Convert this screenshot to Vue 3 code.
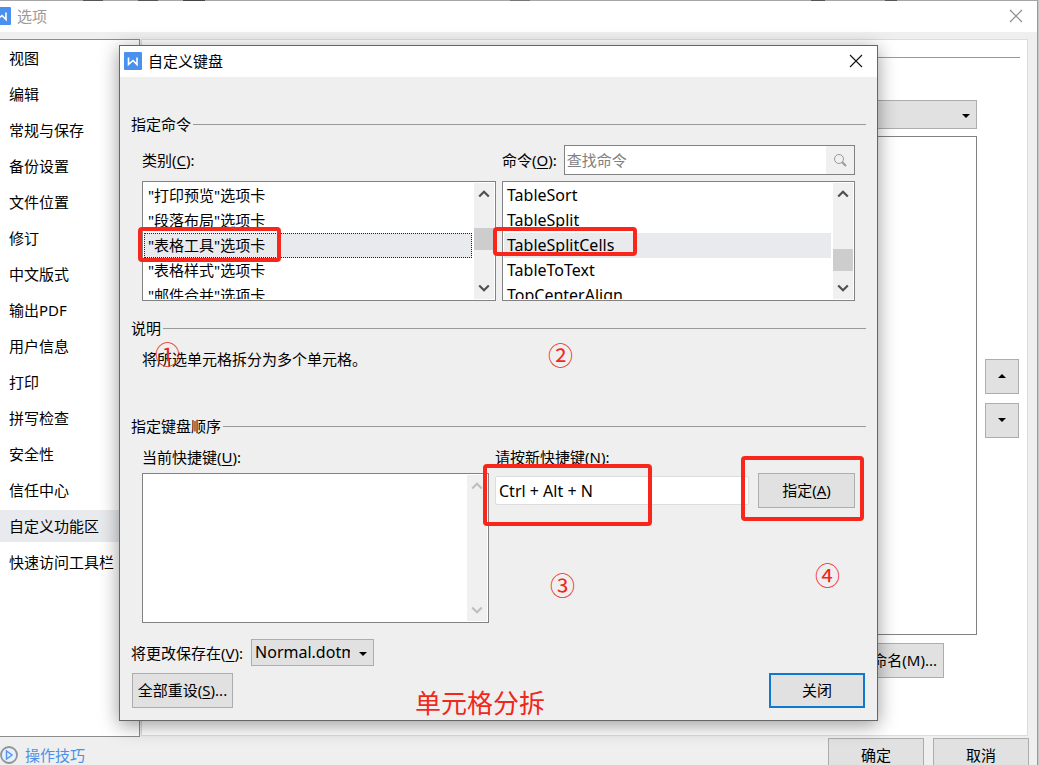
<script setup>
import { ref } from 'vue'

const sections = ['视图', '编辑', '常规与保存', '备份设置', '文件位置', '修订', '中文版式', '输出PDF', '用户信息', '打印', '拼写检查', '安全性', '信任中心', '自定义功能区', '快速访问工具栏']
const activeSection = ref('自定义功能区')

const categories = ['"打印预览"选项卡', '"段落布局"选项卡', '"表格工具"选项卡', '"表格样式"选项卡', '"邮件合并"选项卡']
const activeCategory = ref(categories[2])

const commands = ['TableSort', 'TableSplit', 'TableSplitCells', 'TableToText', 'TopCenterAlign']
const activeCommand = ref(commands[2])

const query = ref('')
const current = ref('')
const shortcut = ref('Ctrl + Alt + N')
</script>

<template>
  <div class="desktop">
    <div class="window">
      <header class="titlebar">
        <svg class="logo" viewBox="0 0 18 18" aria-hidden="true">
          <rect width="18" height="18" rx="1" fill="#4a90ee" />
          <path d="M4.5 5.5V12.5L9 8.5L13 12.5V5.5" fill="none" stroke="#fff" stroke-width="1.6" />
        </svg>
        <h1>选项</h1>
        <button class="close dim" aria-label="关闭选项">
          <svg viewBox="0 0 14 14"><path d="M1 1L13 13M13 1L1 13" /></svg>
        </button>
      </header>

      <div class="main">
        <nav class="sidebar">
          <button
            v-for="s in sections"
            :key="s"
            :class="{ active: s === activeSection }"
            @click="activeSection = s"
          >{{ s }}</button>
        </nav>
        <section class="panel">
          <hr class="rule">
          <div class="panel-body">
            <div class="panel-left">
              <div class="combo wide">
                <select aria-label="命令来源"><option></option></select>
                <svg class="caret" viewBox="0 0 8 4"><path d="M0 0H8L4 4Z" /></svg>
              </div>
              <div class="tree"></div>
              <div class="rename"><button class="btn">重命名(M)...</button></div>
              <div class="hidden-actions">
                <button class="btn" aria-label="添加"></button>
                <button class="btn" aria-label="删除"></button>
              </div>
            </div>
            <div class="movers">
              <button class="btn" aria-label="上移"><svg class="caret" viewBox="0 0 8 4"><path d="M0 4H8L4 0Z" /></svg></button>
              <button class="btn" aria-label="下移"><svg class="caret" viewBox="0 0 8 4"><path d="M0 0H8L4 4Z" /></svg></button>
            </div>
          </div>
        </section>
      </div>

      <footer class="footer">
        <a href="#tips">
          <svg viewBox="0 0 18 18" aria-hidden="true">
            <circle cx="9" cy="9" r="8" fill="#e8f1ff" stroke="#8f9499" stroke-width="1.8" />
            <path d="M6.5 5V13L12 9Z" fill="none" stroke="#5b97ee" stroke-width="1.5" />
          </svg>
          操作技巧
        </a>
        <div class="footer-actions">
          <button class="btn">确定</button>
          <button class="btn">取消</button>
        </div>
      </footer>
    </div>

    <div class="dialog" role="dialog" aria-labelledby="dlg-title">
      <header class="titlebar">
        <svg class="logo" viewBox="0 0 18 18" aria-hidden="true">
          <rect width="18" height="18" rx="1" fill="#4a90ee" />
          <path d="M4.5 5.5V12.5L9 8.5L13 12.5V5.5" fill="none" stroke="#fff" stroke-width="1.6" />
        </svg>
        <h2 id="dlg-title">自定义键盘</h2>
        <button class="close" aria-label="关闭对话框">
          <svg viewBox="0 0 14 14"><path d="M1 1L13 13M13 1L1 13" /></svg>
        </button>
      </header>

      <div class="dialog-body">
        <section class="group pick">
          <h3>指定命令</h3>
          <div class="columns">
            <div class="column">
              <div class="label-row"><span id="cat">类别(<u>C</u>):</span></div>
              <div class="listbox">
                <ul role="listbox" aria-labelledby="cat">
                  <li
                    v-for="c in categories"
                    :key="c"
                    role="option"
                    :aria-selected="c === activeCategory"
                    :class="{ selected: c === activeCategory, focus: c === activeCategory }"
                    @click="activeCategory = c"
                  >{{ c }}</li>
                </ul>
                <div class="scrollbar">
                  <svg viewBox="0 0 10 7"><path d="M1 6L5 2L9 6" /></svg>
                  <span class="thumb upper"></span>
                  <svg viewBox="0 0 10 7"><path d="M1 1L5 5L9 1" /></svg>
                </div>
              </div>
            </div>
            <div class="column">
              <div class="label-row">
                <label for="find">命令(<u>O</u>):</label>
                <div class="search">
                  <input id="find" v-model="query" type="text" placeholder="查找命令">
                  <button aria-label="查找">
                    <svg viewBox="0 0 14 14"><circle cx="6" cy="6" r="4.5" /><path d="M9 9L13 13" stroke-width="2" /></svg>
                  </button>
                </div>
              </div>
              <div class="listbox latin">
                <ul role="listbox" aria-label="命令">
                  <li
                    v-for="c in commands"
                    :key="c"
                    role="option"
                    :aria-selected="c === activeCommand"
                    :class="{ selected: c === activeCommand }"
                    @click="activeCommand = c"
                  >{{ c }}</li>
                </ul>
                <div class="scrollbar">
                  <svg viewBox="0 0 10 7"><path d="M1 6L5 2L9 6" /></svg>
                  <span class="thumb lower"></span>
                  <svg viewBox="0 0 10 7"><path d="M1 1L5 5L9 1" /></svg>
                </div>
              </div>
            </div>
          </div>
        </section>

        <section class="group about">
          <h3>说明</h3>
          <p>将所选单元格拆分为多个单元格。</p>
        </section>

        <section class="group keys">
          <h3>指定键盘顺序</h3>
          <div class="key-row">
            <div class="current">
              <label for="cur">当前快捷键(<u>U</u>):</label>
              <div class="memo">
                <textarea id="cur" v-model="current"></textarea>
                <div class="scrollbar faded">
                  <svg viewBox="0 0 10 7"><path d="M1 6L5 2L9 6" /></svg>
                  <svg viewBox="0 0 10 7"><path d="M1 1L5 5L9 1" /></svg>
                </div>
              </div>
            </div>
            <div class="next">
              <label for="new">请按新快捷键(N):</label>
              <div class="assign">
                <input id="new" v-model="shortcut" class="latin" type="text">
                <button class="btn">指定(<u>A</u>)</button>
              </div>
            </div>
          </div>
        </section>

        <div class="save-row">
          <label for="save">将更改保存在(<u>V</u>):</label>
          <div class="combo">
            <select id="save" class="latin"><option>Normal.dotm</option></select>
            <svg class="caret" viewBox="0 0 8 4"><path d="M0 0H8L4 4Z" /></svg>
          </div>
        </div>
        <div class="actions">
          <button class="btn reset">全部重设(<u>S</u>)...</button>
          <button class="btn default">关闭</button>
        </div>
      </div>

      <span class="mark m1"></span>
      <span class="mark m2"></span>
      <span class="mark m3"></span>
      <span class="mark m4"></span>
      <span class="note n1">①</span>
      <span class="note n2">②</span>
      <span class="note n3">③</span>
      <span class="note n4">④</span>
      <span class="note caption">单元格分拆</span>
    </div>
  </div>
</template>

<style>
body {
  margin: 0;
}
</style>

<style scoped>
.desktop,
.desktop * {
  box-sizing: border-box;
}
.desktop {
  position: relative;
  height: 100vh;
  overflow: hidden;
  padding: 1px 1px 0 0;
  background: linear-gradient(90deg, #a6a6a6 83px, #555 83px 103px, #a6a6a6 103px 138px, #555 138px 158px, #a6a6a6 158px 183px, #444 183px 205px, #a6a6a6 205px 510px, #777 510px 530px, #a6a6a6 530px 811px, #555 811px 825px, #a6a6a6 825px 885px, #555 885px 897px, #a6a6a6 897px calc(100% - 1px), #c8c8c8 calc(100% - 1px));
  font: 15px/20px "Noto Sans", "Noto Sans CJK SC", sans-serif;
  color: #000;
}
button,
input,
select,
textarea {
  font: inherit;
  color: inherit;
  margin: 0;
  padding: 0;
  border: 0;
  border-radius: 0;
  background: none;
  outline: none;
}
h1,
h2,
h3,
p,
ul {
  margin: 0;
  padding: 0;
  font: inherit;
  list-style: none;
}
u {
  text-underline-offset: 2px;
}
.latin {
  font-size: 16px;
}
.window {
  height: 100%;
  display: flex;
  flex-direction: column;
  background: #efefef;
  border-right: 1px solid #999;
}
.titlebar {
  display: flex;
  align-items: center;
  height: 31px;
  flex: none;
  padding: 0 14px 2px 4px;
  gap: 6px;
  background: #fff;
}
.logo {
  width: 18px;
  height: 18px;
  flex: none;
}
.window > .titlebar {
  padding-left: 0;
}
.window > .titlebar .logo {
  margin-left: -7px;
}
.window > .titlebar h1 {
  color: #999;
}
.close {
  margin-left: auto;
  width: 14px;
  height: 14px;
  display: flex;
}
.close svg {
  width: 14px;
  height: 14px;
  fill: none;
  stroke: #111;
  stroke-width: 1.1;
}
.close.dim svg {
  stroke: #888;
}
.main {
  flex: 1;
  display: flex;
  min-height: 0;
  padding: 7px 9px 0 0;
}
.sidebar {
  width: 140px;
  display: flex;
  flex-direction: column;
  gap: 4px;
  padding-top: 2px;
  background: #fff;
  border: 1px solid #8c8c8c;
  border-left: 0;
}
.sidebar button {
  height: 32px;
  padding-left: 9px;
  text-align: left;
  white-space: nowrap;
}
.sidebar .active {
  background: #e9eaed;
}
.panel {
  flex: 1;
  display: flex;
  flex-direction: column;
  margin: 0 0 1px 1px;
  padding: 17px 7px 0 12px;
  background: #fff;
  border: 1px solid #dcdcdc;
}
.rule {
  width: 100%;
  height: 1px;
  margin: 0;
  border: 0;
  background: #999;
}
.panel-body {
  display: flex;
  gap: 8px;
  margin-top: 42px;
}
.panel-left {
  flex: 1;
}
.combo {
  position: relative;
  width: 123px;
  height: 27px;
}
.combo select {
  appearance: none;
  width: 100%;
  height: 100%;
  padding: 0 23px 1px 3px;
  border: 1px solid #adadad;
  background: #e1e1e1;
}
.caret {
  width: 8px;
  height: 4px;
  fill: #000;
}
.combo .caret {
  position: absolute;
  right: 7px;
  top: 50%;
  margin-top: -1px;
  pointer-events: none;
}
.combo.wide {
  width: 100%;
  height: 29px;
}
.tree {
  height: 499px;
  margin-top: 7px;
  border: 1px solid #828282;
}
.btn {
  height: 35px;
  padding-bottom: 2px;
  border: 1px solid #adadad;
  background: #e1e1e1;
  white-space: nowrap;
}
.rename {
  display: flex;
  justify-content: flex-end;
  margin: 8px 33px 0 0;
}
.rename .btn {
  padding: 0 6px 2px;
}
.hidden-actions {
  display: flex;
  gap: 326px;
  margin: 8px 0 0 104px;
}
.hidden-actions .btn {
  width: 96px;
  border-color: #777;
}
.movers {
  display: flex;
  flex-direction: column;
  justify-content: flex-start;
  gap: 9px;
  padding: 259px 1px 0 0;
}
.movers .btn {
  width: 34px;
  display: flex;
  align-items: center;
  justify-content: center;
}
.footer {
  flex: none;
  display: flex;
  justify-content: space-between;
  height: 28px;
  padding: 1px 8px 0 0;
}
.footer a {
  display: flex;
  align-items: center;
  align-self: flex-start;
  height: 34px;
  gap: 7px;
  color: #4a8fea;
  text-decoration: none;
}
.footer a svg {
  width: 18px;
  height: 18px;
}
.footer-actions {
  display: flex;
  gap: 9px;
}
.footer-actions .btn {
  width: 96px;
}

.dialog {
  position: absolute;
  top: 45px;
  left: 119px;
  right: 161px;
  background: #efefef;
  border: 1px solid #666;
  box-shadow: 0 4px 18px rgba(0, 0, 0, 0.4);
}
.dialog-body {
  padding: 37px 11px 12px;
}
.group h3 {
  display: flex;
  align-items: center;
  gap: 2px;
}
.group h3::after {
  content: "";
  flex: 1;
  height: 1px;
  background: #999;
}
.pick {
  height: 204px;
}
.columns {
  display: grid;
  grid-template-columns: 354fr 353fr;
  gap: 6px;
  padding: 11px 11px 0;
}
.label-row {
  display: flex;
  align-items: center;
  gap: 7px;
  height: 30px;
  margin-bottom: 6px;
}
.label-row label {
  white-space: nowrap;
}
.search {
  flex: 1;
  min-width: 0;
  height: 30px;
  display: flex;
  border: 1px solid #828282;
  background: #fff;
}
.search input {
  flex: 1;
  min-width: 0;
  padding-left: 2px;
}
.search input::placeholder {
  color: #808080;
  opacity: 1;
}
.search button {
  width: 28px;
  display: flex;
  align-items: center;
  justify-content: center;
  background: #f0f0f0;
}
.search svg {
  width: 14px;
  height: 14px;
  fill: none;
  stroke: #999;
}
.listbox {
  display: flex;
  height: 120px;
  padding: 1px;
  background: #fff;
  border: 1px solid #828282;
}
.listbox ul {
  flex: 1;
  overflow: hidden;
  padding: 0 2px 0 0;
}
.listbox li {
  height: 25px;
  padding-left: 3px;
  line-height: 22px;
  border: 1px solid transparent;
}
.listbox.latin li {
  padding-left: 2px;
}
.listbox li.selected {
  background: #e9eaed;
}
.listbox li.focus {
  border: 1px dotted #222;
}
.scrollbar {
  width: 20px;
  display: flex;
  flex-direction: column;
  align-items: center;
  justify-content: space-between;
  padding: 6px 1px 6px 0;
  background: #f0f0f0;
  position: relative;
}
.scrollbar svg {
  width: 12px;
  height: 9px;
  fill: none;
  stroke: #505050;
  stroke-width: 1.8;
}
.scrollbar.faded svg {
  stroke: #bfbfbf;
}
.thumb {
  position: absolute;
  left: 0;
  right: 0;
  height: 22px;
  background: #cdcdcd;
}
.thumb.upper {
  top: 39%;
}
.thumb.lower {
  top: 57%;
}
.about {
  height: 98px;
}
.about p {
  padding: 11px 11px 0;
}
.keys {
  height: 223px;
}
.key-row {
  display: flex;
  gap: 6px;
  padding: 11px 11px 0;
}
.key-row label {
  display: block;
  margin-bottom: 6px;
}
.current {
  flex: 347;
}
.next {
  flex: 360;
}
.memo {
  display: flex;
  height: 150px;
  padding: 1px;
  background: #fff;
  border: 1px solid #828282;
}
.memo textarea {
  flex: 1;
  min-width: 0;
  resize: none;
}
.assign {
  display: flex;
  align-items: center;
  gap: 9px;
}
.assign input {
  flex: 1;
  min-width: 0;
  height: 29px;
  padding-left: 3px;
  background: #fff;
  border: 1px solid #ddd;
  border-radius: 2px;
}
.assign .btn {
  width: 97px;
}
.save-row {
  display: flex;
  align-items: center;
  gap: 8px;
}
.actions {
  display: flex;
  justify-content: space-between;
  padding: 0 1px;
  margin-top: 7px;
}
.reset {
  width: 101px;
}
.default {
  width: 96px;
  border: 2px solid #0f78d0;
}

.mark {
  position: absolute;
  border: 4px solid #f8261b;
  border-radius: 4px;
  pointer-events: none;
}
.m1 {
  left: 18px;
  top: 181px;
  width: 143px;
  height: 35px;
}
.m2 {
  left: 373px;
  top: 181px;
  width: 144px;
  height: 29px;
}
.m3 {
  left: 363px;
  top: 418px;
  width: 169px;
  height: 62px;
}
.m4 {
  left: 621px;
  top: 410px;
  width: 123px;
  height: 65px;
}
.note {
  position: absolute;
  font: 25px/26px "Noto Sans CJK SC", sans-serif;
  color: #f0281c;
  white-space: nowrap;
  pointer-events: none;
}
.n1 {
  left: 35px;
  top: 294px;
}
.n2 {
  left: 428px;
  top: 295px;
}
.n3 {
  left: 430px;
  top: 525px;
}
.n4 {
  left: 695px;
  top: 515px;
}
.caption {
  left: 295px;
  top: 643px;
  font-size: 26px;
}
</style>
